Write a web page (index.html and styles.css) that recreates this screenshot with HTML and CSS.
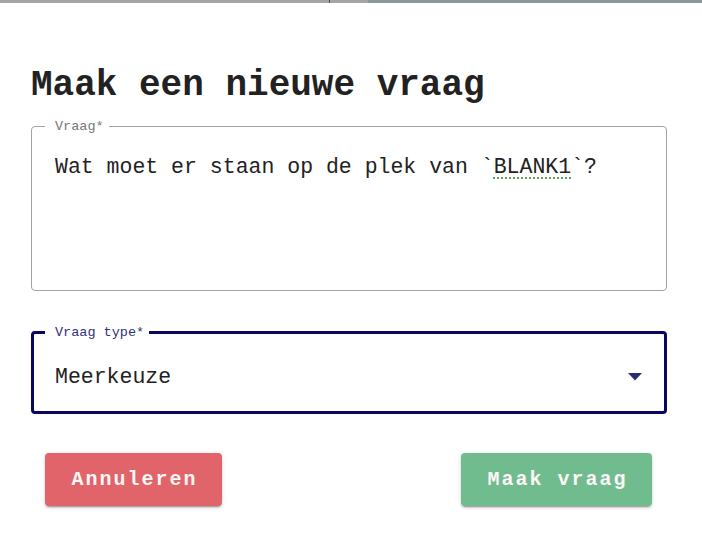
FILE: index.html
```html
<!DOCTYPE html>
<html lang="nl">
  <head>
    <meta charset="UTF-8" />
    <title>Maak een nieuwe vraag</title>
    <link rel="stylesheet" href="styles.css">
  </head>
  <body>
    <!-- achtergrond achter de dialoog -->
    <div class="backdrop">
      <div class="backdrop-left"><span class="divider"></span></div>
      <div class="backdrop-right"></div>
    </div>

    <div class="dialog">
      <h1>Maak een nieuwe vraag</h1>

      <!-- Vraag -->
      <fieldset class="field">
        <legend>Vraag*</legend>
        <div class="field-body textarea">
          Wat moet er staan op de plek van `<span class="spell">BLANK1</span>`?
        </div>
      </fieldset>

      <!-- Vraag type -->
      <fieldset class="field focused">
        <legend>Vraag type*</legend>
        <div class="field-body select">
          <span>Meerkeuze</span>
          <svg class="arrow" width="14" height="8" viewBox="0 0 14 8">
            <path d="M0 0h14L7 7.5z" fill="#2b2b70" />
          </svg>
        </div>
      </fieldset>

      <!-- Knoppen -->
      <div class="actions">
        <button class="btn cancel">Annuleren</button>
        <button class="btn confirm">Maak vraag</button>
      </div>
    </div>
  </body>
</html>
```

FILE: styles.css
```css
body {
  margin: 0;
  font-family: "Liberation Mono", "DejaVu Sans Mono", monospace;
  color: #222;
  background: #fff;
  width: 702px;
  height: 536px;
  overflow: hidden;
}

.backdrop {
  display: flex;
  height: 3px;
}

.backdrop-left {
  width: 368px;
  background: #a4a4a4;
  display: flex;
}

.divider {
  width: 1px;
  margin-left: 329px;
  background: #4a4a4a;
}

.backdrop-right {
  flex: 1;
  background: #879999;
}

.dialog {
  background: #fff;
  border-top-right-radius: 5px;
  margin-top: -1px;
  padding: 61px 35px 0 31px;
  height: 480px;
  position: relative;
  top: 1px;
}

h1 {
  margin: 0 0 12px 0;
  font-size: 36px;
  line-height: 44px;
  font-weight: bold;
  color: #222;
}

.field {
  margin: 0;
  padding: 0 0 0 13px;
  border: 1px solid #a3a3a3;
  border-radius: 4px;
}

.field legend {
  font-size: 13.5px;
  line-height: 13px;
  padding: 0 5px 0 10px;
  color: #777;
}

.field-body {
  box-sizing: border-box;
  padding-left: 10px;
  font-size: 21.5px;
  line-height: 28px;
  color: #222;
}

.textarea {
  height: 157px;
  padding-top: 20px;
}

.spell {
  text-decoration: underline dotted #5aa65a;
  text-underline-offset: 4px;
  text-decoration-thickness: 2px;
}

.field.focused {
  margin-top: 35px;
  padding-left: 11px;
  border: 3px solid #07075f;
}

.field.focused legend {
  color: #303080;
  padding-left: 10px;
}

.select {
  display: flex;
  align-items: center;
  justify-content: space-between;
  height: 72px;
  padding-right: 22px;
  padding-top: 4px;
}

.actions {
  display: flex;
  justify-content: space-between;
  padding: 0 15px 0 14px;
  margin-top: 39px;
}

.btn {
  font-family: "Liberation Mono", "DejaVu Sans Mono", monospace;
  font-size: 20px;
  font-weight: bold;
  letter-spacing: 2px;
  color: #fdf6f6;
  border: none;
  border-radius: 4px;
  height: 53px;
  padding: 0 22px 0 24px;
  box-shadow: 0 3px 1px -2px rgba(0, 0, 0, 0.2), 0 2px 2px 0 rgba(0, 0, 0, 0.14), 0 1px 5px 0 rgba(0, 0, 0, 0.12);
}

.cancel {
  background: #e06469;
  width: 177px;
}

.confirm {
  background: #71bc8f;
  width: 191px;
}
```
